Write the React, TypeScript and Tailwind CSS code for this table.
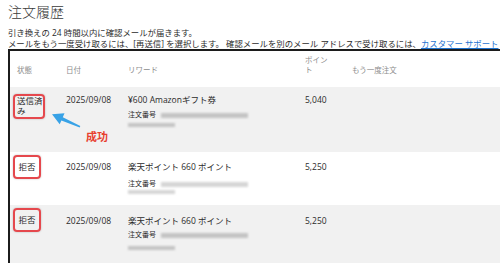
const rows = [
	{
		status: "送信済み",
		date: "2025/09/08",
		reward: "¥600 Amazonギフト券",
		points: "5,040",
		rowClass: "h-[65px] bg-[#f1f1f1]",
		statusPad: "pt-[7px]",
		boxClass: "w-[32px] pl-[2px] pr-0 pt-0 pb-[1px] text-left",
		textPad: "pt-[8px]",
		orderGap: "mt-[5px]",
		barGap: "mt-[3px]",
		barColor: "bg-[#c4c4c4]",
	},
	{
		status: "拒否",
		date: "2025/09/08",
		reward: "楽天ポイント 660 ポイント",
		points: "5,250",
		rowClass: "h-[53px] bg-white",
		statusPad: "pt-[3px]",
		boxClass: "w-[28px] px-[3px] py-[5px] text-center",
		textPad: "pt-[10px]",
		orderGap: "mt-[7px]",
		barGap: "mt-[1px]",
		barColor: "bg-[#d6d6d6]",
	},
	{
		status: "拒否",
		date: "2025/09/08",
		reward: "楽天ポイント 660 ポイント",
		points: "5,250",
		rowClass: "h-[58px] bg-[#f1f1f1]",
		statusPad: "pt-[3px]",
		boxClass: "w-[28px] px-[3px] py-[5px] text-center",
		textPad: "pt-[11px]",
		orderGap: "mt-[4px]",
		barGap: "mt-[6px]",
		barColor: "bg-[#c4c4c4]",
	},
];

export default function App() {
	return (
		<div className="relative w-[500px] h-[263px] overflow-hidden bg-white text-[#2b2b2b] font-['Open_Sans','Noto_Sans_CJK_JP',sans-serif]">
			<h1 className="pl-2 pt-[2px] text-[14px] leading-[20px] font-light text-[#3a3a3a]">
				注文履歴
			</h1>

			<p className="mt-[5px] pl-2 text-[8.4px] leading-[11px] whitespace-nowrap">
				引き換えの 24 時間以内に確認メールが届きます。
				<br />
				メールをもう一度受け取るには、[再送信] を選択します。 確認メールを別のメール アドレスで受け取るには、
				<span className="text-[#1f74d1] underline">カスタマー サポート</span>
			</p>

			<div className="ml-2 border-l-2 border-t-2 border-[#1c1c1c]">
				<div className="grid grid-cols-[56px_62px_177px_47px_1fr] h-[36px] items-end pb-[12px] text-[7.5px] leading-[10px] text-[#8c8c8c]">
					<div className="pl-[7px]">状態</div>
					<div>日付</div>
					<div>リワード</div>
					<div className="pr-[22px]">ポイント</div>
					<div>もう一度注文</div>
				</div>

				{rows.map((row, idx) => (
					<div
						key={idx}
						className={`grid grid-cols-[56px_62px_177px_47px_1fr] items-start text-[8.5px] leading-[10px] ${row.rowClass}`}>
						<div className={`pl-[3px] ${row.statusPad}`}>
							<div
								className={`border-2 border-[#e5484d] rounded-[4px] shadow-[0_0_2px_rgba(0,0,0,0.25)] ${row.boxClass}`}>
								{row.status}
							</div>
						</div>
						<div className={row.textPad}>{row.date}</div>
						<div className={row.textPad}>
							<div>{row.reward}</div>
							<div className={`flex items-center ${row.orderGap}`}>
								<span className="text-[7px]">注文番号</span>
								<span className={`ml-[5px] w-[87px] h-[5px] blur-[1px] ${row.barColor}`} />
							</div>
							<div className={`w-[47px] h-[4px] blur-[1px] ${row.barGap} ${row.barColor}`} />
						</div>
						<div className={row.textPad}>{row.points}</div>
						<div />
					</div>
				))}
			</div>

			<svg
				className="absolute left-[48px] top-[108px] pointer-events-none"
				width="36"
				height="24"
				viewBox="48 108 36 24">
				<polygon
					points="52,114.3 64.5,113.3 62.8,117.2 80.3,126 79.7,127.4 61.4,120.4 59.7,124.3"
					fill="#38a2e6"
				/>
			</svg>

			<div className="absolute left-[86px] top-[130px] text-[11px] leading-[12px] font-bold text-[#e8402f] font-['Noto_Sans_CJK_JP',sans-serif]">
				成功
			</div>
		</div>
	);
}
